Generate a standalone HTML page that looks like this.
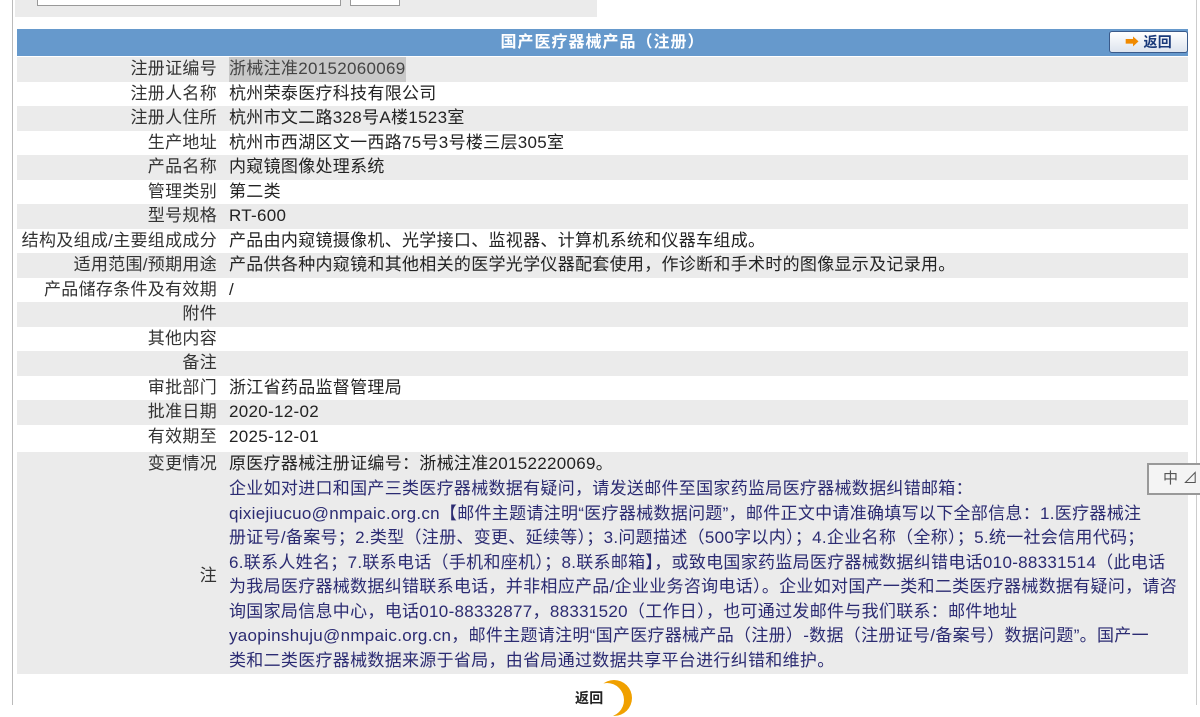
<!DOCTYPE html>
<html><head><meta charset="utf-8"><style>
body{margin:0;width:1200px;height:705px;overflow:hidden;background:#fff;font-family:"Liberation Sans","Noto Sans CJK SC",sans-serif;font-size:17px;letter-spacing:0.3px;color:#222;position:relative}
.abs{position:absolute}
.row{position:absolute;left:17px;width:1171px;height:24.5px;line-height:24.5px}
.g{background:#ebebeb}
.l{position:absolute;right:971px;text-align:right;white-space:nowrap;color:#333}
.v{position:absolute;left:212px;white-space:nowrap;color:#222}
</style></head><body>
<div class="abs" style="left:12px;top:0;width:1px;height:705px;background:#bbb"></div>
<div class="abs" style="left:1196px;top:0;width:1px;height:705px;background:#ccc"></div>
<div class="abs" style="left:15px;top:0;width:582px;height:17px;background:#ebebeb"></div>
<div class="abs" style="left:37px;top:-2px;width:302px;height:6px;border:1px solid #999;background:#fff"></div>
<div class="abs" style="left:350px;top:-2px;width:48px;height:6px;border:1px solid #999;background:#fff"></div>
<div class="abs" style="left:17px;top:29px;width:1171px;height:27px;background:#6699cc;color:#fff;font-weight:bold;text-align:center;line-height:27px;font-size:16px;letter-spacing:1px">国产医疗器械产品（注册）</div>
<div class="abs" style="left:1109px;top:31px;width:77px;height:20px;border:1px solid #3a5a8a;border-radius:3px;background:linear-gradient(#fff,#dde4ee);font-size:14px;font-weight:bold;color:#1a3a7a;line-height:20px;text-align:center"><span style="color:#f08a00">➡</span> 返回</div>

<div class="row g" style="top:57px"><span class="l">注册证编号</span><span class="v" style="background:#c8c8c8;color:#444">浙械注准20152060069</span></div>
<div class="row" style="top:81.5px"><span class="l">注册人名称</span><span class="v">杭州荣泰医疗科技有限公司</span></div>
<div class="row g" style="top:106px"><span class="l">注册人住所</span><span class="v">杭州市文二路328号A楼1523室</span></div>
<div class="row" style="top:130.5px"><span class="l">生产地址</span><span class="v">杭州市西湖区文一西路75号3号楼三层305室</span></div>
<div class="row g" style="top:155px"><span class="l">产品名称</span><span class="v">内窥镜图像处理系统</span></div>
<div class="row" style="top:179.5px"><span class="l">管理类别</span><span class="v">第二类</span></div>
<div class="row g" style="top:204px"><span class="l">型号规格</span><span class="v">RT-600</span></div>
<div class="row" style="top:228.5px"><span class="l">结构及组成/主要组成成分</span><span class="v">产品由内窥镜摄像机、光学接口、监视器、计算机系统和仪器车组成。</span></div>
<div class="row g" style="top:253px"><span class="l">适用范围/预期用途</span><span class="v">产品供各种内窥镜和其他相关的医学光学仪器配套使用，作诊断和手术时的图像显示及记录用。</span></div>
<div class="row" style="top:277.5px"><span class="l">产品储存条件及有效期</span><span class="v">/</span></div>
<div class="row g" style="top:302px"><span class="l">附件</span><span class="v"></span></div>
<div class="row" style="top:326.5px"><span class="l">其他内容</span><span class="v"></span></div>
<div class="row g" style="top:351px"><span class="l">备注</span><span class="v"></span></div>
<div class="row" style="top:375.5px"><span class="l">审批部门</span><span class="v">浙江省药品监督管理局</span></div>
<div class="row g" style="top:400px"><span class="l">批准日期</span><span class="v">2020-12-02</span></div>
<div class="row" style="top:424.5px"><span class="l">有效期至</span><span class="v">2025-12-01</span></div>
<div class="row g" style="top:452px"><span class="l">变更情况</span><span class="v">原医疗器械注册证编号：浙械注准20152220069。</span></div>
<div class="abs g" style="left:17px;top:476px;width:1171px;height:198px"></div>
<div class="abs" style="left:160px;top:564px;width:57px;text-align:right;color:#333;line-height:24.5px">注</div>
<div class="abs" style="left:229px;top:477px;width:965px;line-height:24.5px;color:#2b2b72;white-space:nowrap">企业如对进口和国产三类医疗器械数据有疑问，请发送邮件至国家药监局医疗器械数据纠错邮箱：<br>qixiejiucuo@nmpaic.org.cn【邮件主题请注明“医疗器械数据问题”，邮件正文中请准确填写以下全部信息：1.医疗器械注<br>册证号/备案号；2.类型（注册、变更、延续等）；3.问题描述（500字以内）；4.企业名称（全称）；5.统一社会信用代码；<br>6.联系人姓名；7.联系电话（手机和座机）；8.联系邮箱】，或致电国家药监局医疗器械数据纠错电话010-88331514（此电话<br>为我局医疗器械数据纠错联系电话，并非相应产品/企业业务咨询电话）。企业如对国产一类和二类医疗器械数据有疑问，请咨<br>询国家局信息中心，电话010-88332877，88331520（工作日），也可通过发邮件与我们联系：邮件地址<br>yaopinshuju@nmpaic.org.cn，邮件主题请注明“国产医疗器械产品（注册）-数据（注册证号/备案号）数据问题”。国产一<br>类和二类医疗器械数据来源于省局，由省局通过数据共享平台进行纠错和维护。</div>
<div class="abs" style="left:1147px;top:463px;width:60px;height:32px;background:#f4f4f4;border:2px solid #999;color:#555;font-size:15px;line-height:28px;padding-left:14px;box-sizing:border-box">中 ⊿</div>
<div class="abs" style="left:596px;top:680px;width:36px;height:36px;border-radius:50%;background:#f0a000"></div>
<div class="abs" style="left:590px;top:683px;width:34px;height:34px;border-radius:50%;background:#fff"></div>
<div class="abs" style="left:575px;top:688px;font-size:14px;font-weight:bold;color:#222">返回</div>
</body></html>
